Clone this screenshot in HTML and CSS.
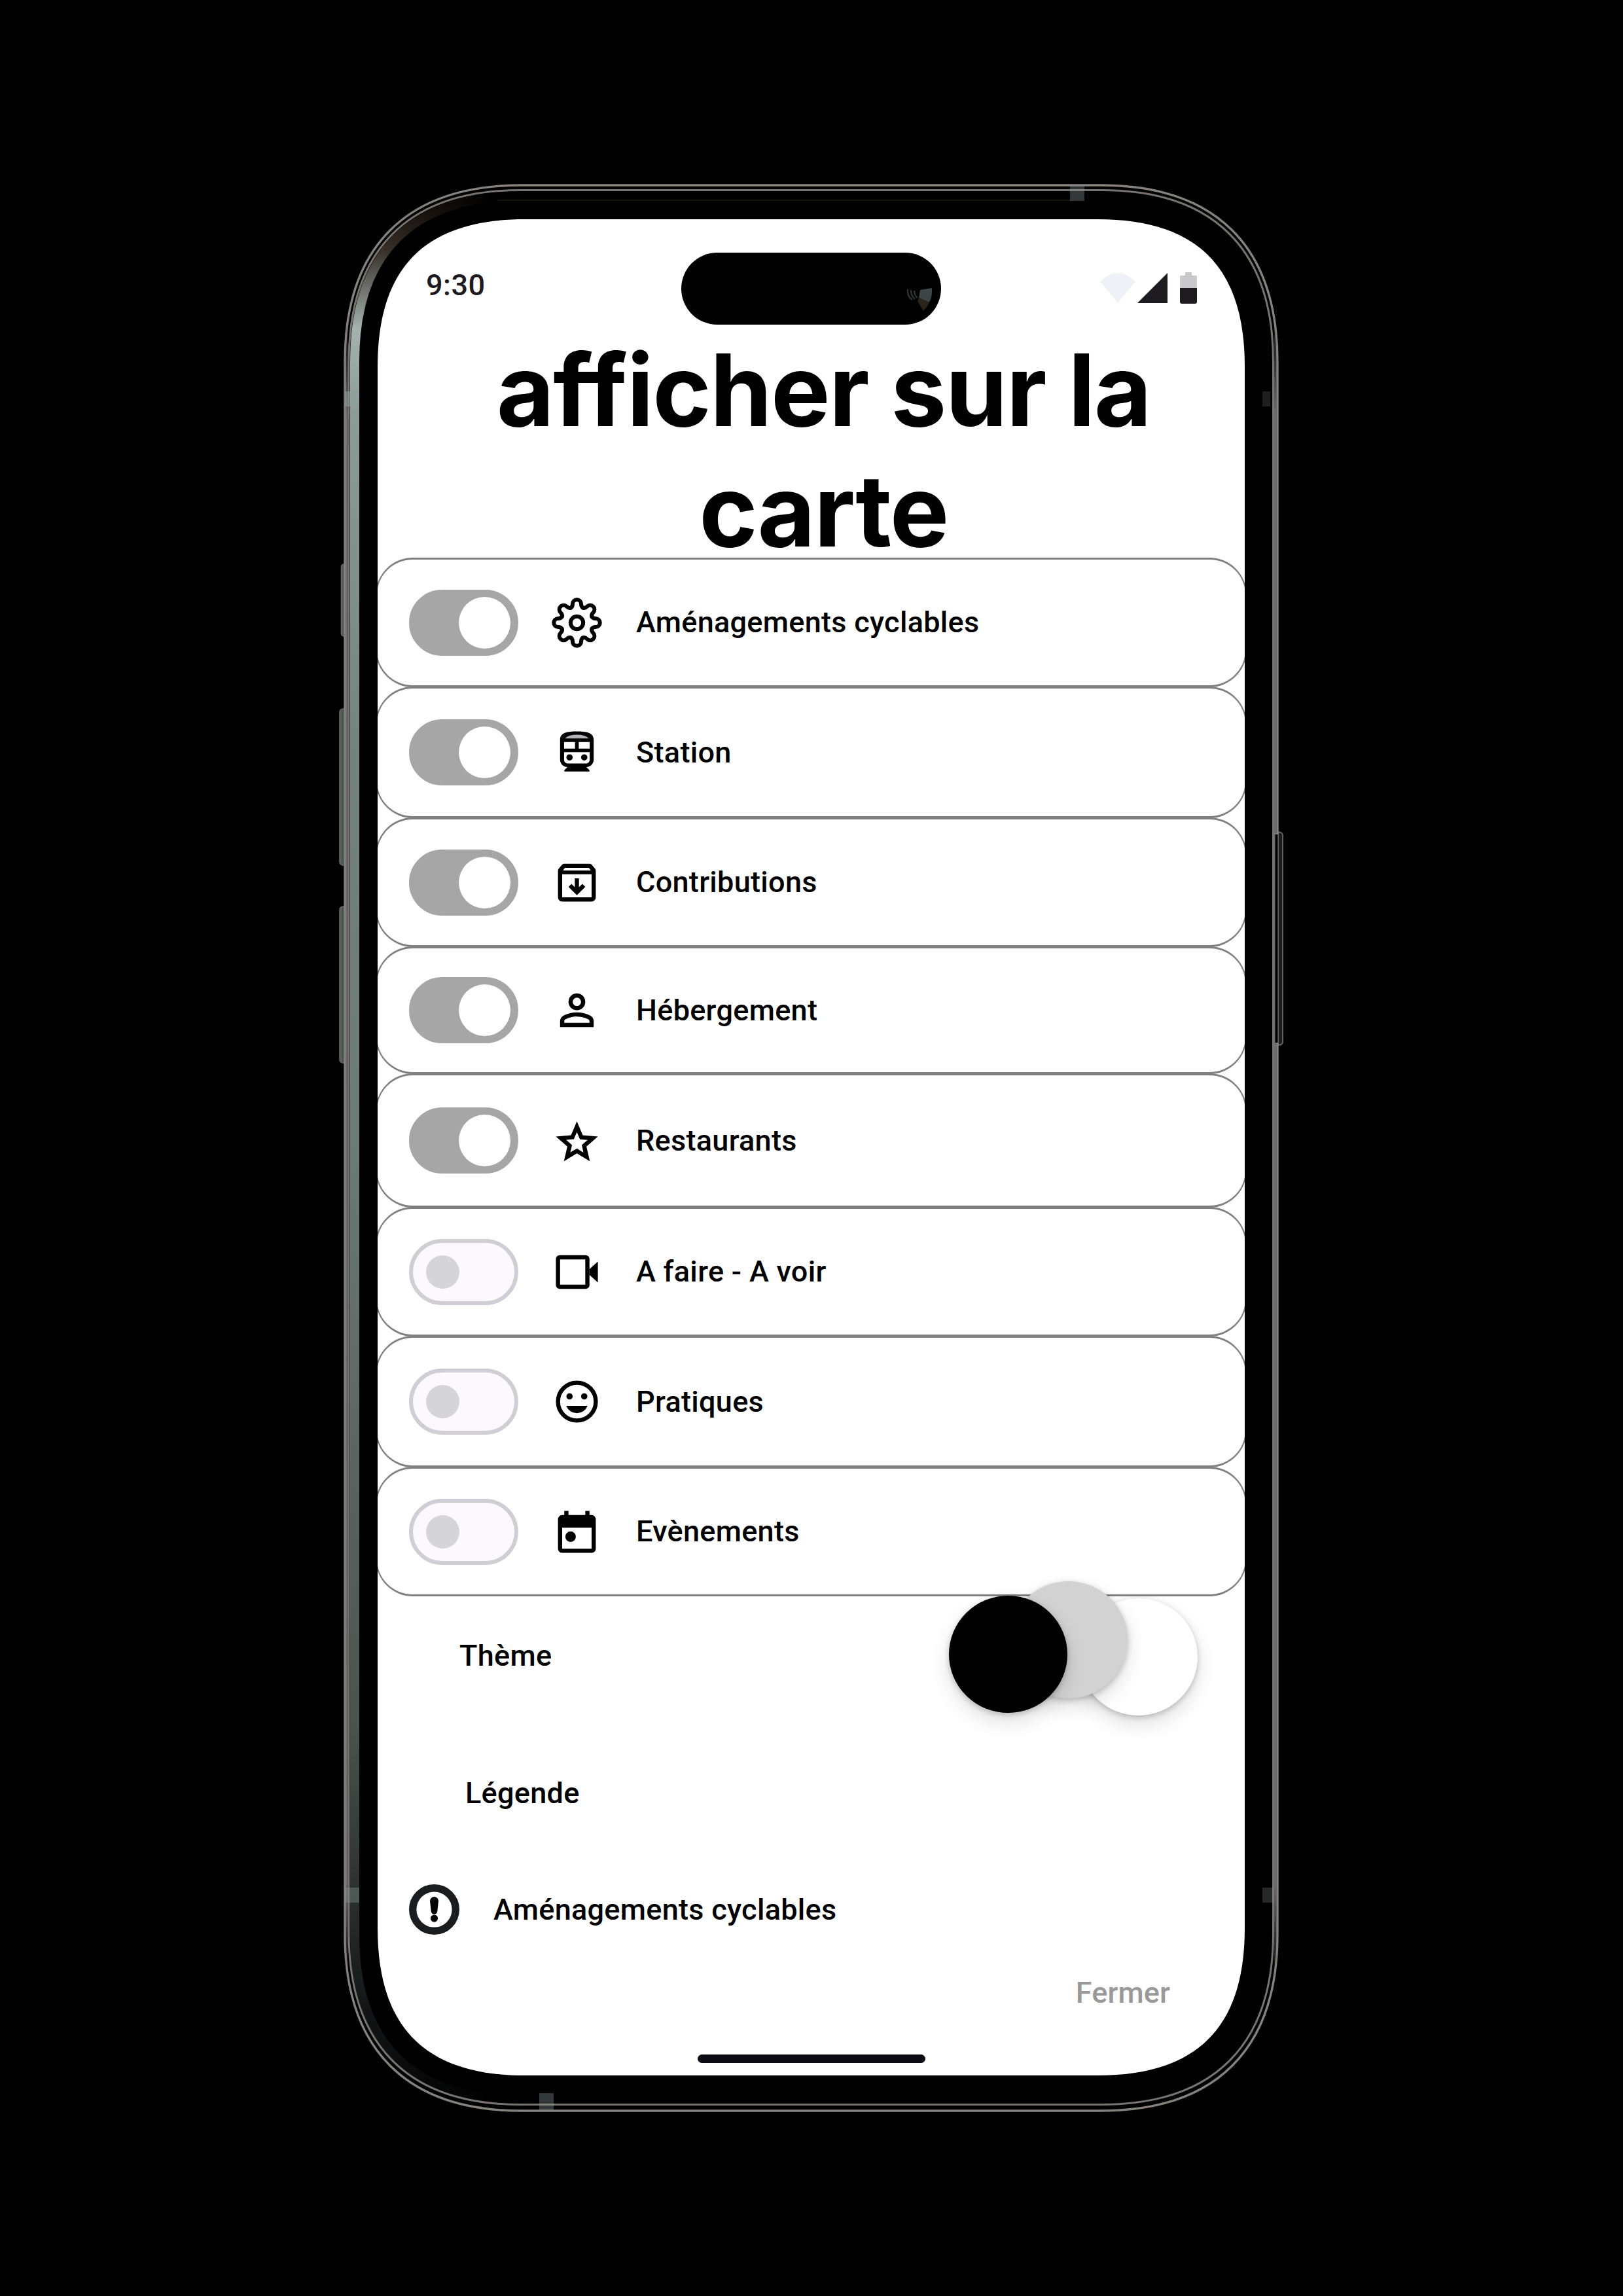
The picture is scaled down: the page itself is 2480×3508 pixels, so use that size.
FILE: index.html
```html
<!DOCTYPE html>
<html lang="fr">
<head>
<meta charset="utf-8">
<title>Afficher sur la carte</title>
<link rel="stylesheet" href="styles.css">
</head>
<body>
<main class="phone">
  <svg class="device" viewBox="515 271 1450 2966" aria-hidden="true">
    <defs>
      <linearGradient id="side" x1="0" y1="281" x2="0" y2="3227" gradientUnits="userSpaceOnUse">
        <stop offset="0" stop-color="#1a1008"/>
        <stop offset=".035" stop-color="#3a322b"/>
        <stop offset=".075" stop-color="#a5b3b0"/>
        <stop offset=".12" stop-color="#8b9b98"/>
        <stop offset=".3" stop-color="#72827f"/>
        <stop offset=".5" stop-color="#6b7a77"/>
        <stop offset=".8" stop-color="#4a534e"/>
        <stop offset=".9" stop-color="#252b2a"/>
        <stop offset=".95" stop-color="#101414"/>
        <stop offset="1" stop-color="#0a0c0c"/>
      </linearGradient>
      <linearGradient id="edge" x1="0" y1="480" x2="0" y2="3030" gradientUnits="userSpaceOnUse">
        <stop offset="0" stop-color="#6f6e6a" stop-opacity="0"/>
        <stop offset=".06" stop-color="#6f6e6a"/>
        <stop offset=".94" stop-color="#6f6e6a"/>
        <stop offset="1" stop-color="#6f6e6a" stop-opacity="0"/>
      </linearGradient>
      <linearGradient id="fade" x1="525" y1="0" x2="760" y2="0" gradientUnits="userSpaceOnUse">
        <stop offset="0" stop-color="#fff"/>
        <stop offset=".25" stop-color="#fff"/>
        <stop offset="1" stop-color="#000"/>
      </linearGradient>
      <mask id="leftOnly" maskUnits="userSpaceOnUse" x="515" y="271" width="1450" height="2966">
        <rect x="515" y="271" width="1450" height="2966" fill="url(#fade)"/>
      </mask>
      <linearGradient id="key" x1="0" y1="0" x2="1" y2="0">
        <stop offset="0" stop-color="#5f6765"/>
        <stop offset=".45" stop-color="#464e4c"/>
        <stop offset=".6" stop-color="#0d1010"/>
        <stop offset="1" stop-color="#2c3332"/>
      </linearGradient>
    </defs>
    <g fill="url(#key)" stroke="#6a6662" stroke-width="1.6">
      <rect x="521.5" y="862" width="12" height="110" rx="4"/>
      <rect x="519" y="1083" width="14" height="239" rx="5"/>
      <rect x="519" y="1385" width="14" height="239" rx="5"/>
    </g>
    <rect x="1946" y="1271.5" width="14" height="325" rx="5" fill="#1c1b1a" stroke="#6f6c67" stroke-width="1.8"/>
    <path d="M797 283H1682c176 0 270 94 270 270V2955c0 176-94 270-270 270H797c-176 0-270-94-270-270V553c0-176 94-270 270-270z" fill="#000" stroke="#85817c" stroke-width="3.4"/>
    <path d="M794 300H1685c165 0 252 87 252 252V2956c0 165-87 252-252 252H794c-165 0-252-87-252-252V552c0-165 87-252 252-252z" fill="none" stroke="url(#side)" stroke-width="14" mask="url(#leftOnly)"/>
    <path d="M795 290.5H1683.500c171 0 262 91 262 262V2953.500c0 171-91 262-262 262H795c-171 0-262-91-262-262V552.500c0-171 91-262 262-262z" fill="none" stroke="#77736e" stroke-width="3"/>
    <g fill="url(#edge)"><rect x="528" y="480" width="3.500" height="2550"/><rect x="1947" y="480" width="3.500" height="2550"/></g>
    <path d="M1950.500 1275V1593" stroke="#000" stroke-width="4"/>
    <path d="M760 306H1640" stroke="#211606" stroke-width="1.5"/>
    <g fill="#8fa09e" fill-opacity=".35">
      <rect x="527" y="598" width="22" height="23" fill-opacity=".55"/>
      <rect x="527" y="2884" width="22" height="23"/>
      <rect x="1929" y="598" width="12" height="23" fill-opacity=".2"/>
      <rect x="1929" y="2884" width="17" height="23" fill-opacity=".25"/>
      <rect x="1635" y="284" width="22" height="23"/>
      <rect x="824" y="3198" width="22" height="26"/>
    </g>
  </svg>

  <section class="screen">
    <header class="status">
      <span class="time">9:30</span>
      <span class="signals">
        <svg class="wifi" viewBox="0 0 54 46"><path d="M0 13Q27-13 54 13L27 46Z" fill="#eff1f6"/></svg>
        <svg class="cell" viewBox="0 0 46 46"><path d="M46 0V46H0Z" fill="#1d1b20"/></svg>
        <svg class="battery" viewBox="0 0 26 48"><path d="M8 0h10v5h6q2 0 2 2v17H0V7q0-2 2-2h6z" fill="#c9c9cb"/><path d="M0 24h26v21q0 3-3 3H3q-3 0-3-3z" fill="#1d1b20"/></svg>
      </span>
      <div class="island">
        <svg class="lens" viewBox="0 0 42 38"><path d="M22 5L40 2Q41 14 36 24L20 17Z" fill="#3d4647"/><path d="M20 17L36 24Q33 31 27 37L18 22Z" fill="#2b2519"/><path d="M3 4Q2 15 10 20M8 5Q8 14 14 19M13 6Q13 13 18 17" fill="none" stroke="#2a3233" stroke-width="2.5"/></svg>
      </div>
    </header>

    <h1 class="title">afficher sur la<br>carte</h1>

    <ul class="layers">
      <li class="layer">
        <span class="switch on"></span>
        <svg class="icon" viewBox="-38.25 -38.25 76.5 76.5">
          <defs><path id="tooth" d="M-9.400-22.700C-7.300-23.600-6.500-25.500-6.500-28.500A6.500 6.500 0 0 1 6.500-28.500C6.500-25.500 7.300-23.600 9.400-22.700"/></defs>
          <g fill="none" stroke="#000" stroke-width="6" stroke-linecap="round">
            <use href="#tooth"/><use href="#tooth" transform="rotate(45)"/><use href="#tooth" transform="rotate(90)"/><use href="#tooth" transform="rotate(135)"/>
            <use href="#tooth" transform="rotate(180)"/><use href="#tooth" transform="rotate(225)"/><use href="#tooth" transform="rotate(270)"/><use href="#tooth" transform="rotate(315)"/>
            <circle r="9.6"/>
          </g>
        </svg>
        <span class="label">Aménagements cyclables</span>
      </li>
      <li class="layer">
        <span class="switch on"></span>
        <svg class="icon" viewBox="0 0 24 24">
          <path fill-rule="evenodd" d="M12 2c-4.400 0-8 .5-8 4v9.500C4 17.400 5.600 19 7.500 19L6 20.500v.6h12v-.6L16.500 19c1.900 0 3.500-1.600 3.500-3.500V6c0-3.500-3.600-4-8-4zM5.900 7.100h5.200v3.100H5.900zM12.900 7.100h5.200v3.100h-5.200zM5.900 11.900h12.200v3.600c0 1-.8 1.800-1.800 1.800H7.700c-1 0-1.800-.8-1.800-1.800z"/>
          <path d="M6.300 5.400Q8 3.600 12 3.600T17.700 5.400Z" fill="#b4b2b5"/>
          <circle cx="8.5" cy="14.4" r="1.5"/><circle cx="15.5" cy="14.4" r="1.5"/>
        </svg>
        <span class="label">Station</span>
      </li>
      <li class="layer">
        <span class="switch on"></span>
        <svg class="icon" viewBox="0 0 24 24"><path fill-rule="evenodd" d="M20.540 5.230l-1.390-1.680C18.880 3.210 18.470 3 18 3H6c-.47 0-.88.21-1.160.55L3.460 5.230C3.170 5.570 3 6.020 3 6.500V19c0 1.100.9 2 2 2h14c1.100 0 2-.9 2-2V6.500c0-.48-.17-.93-.46-1.270zM6.240 5h11.520l.83 1.200H5.420zM5 19V8h14v11zM12 18l4-4-1.400-1.400-1.600 1.600V10h-2v4.200l-1.600-1.600L8 14z"/></svg>
        <span class="label">Contributions</span>
      </li>
      <li class="layer">
        <span class="switch on"></span>
        <svg class="icon" viewBox="0 0 24 24"><path d="M12 12q-1.650 0-2.825-1.175T8 8t1.175-2.825T12 4t2.825 1.175T16 8t-1.175 2.825T12 12m-8 8v-2.800q0-.85.438-1.562T5.600 14.550q1.550-.775 3.150-1.162T12 13t3.250.388t3.150 1.162q.725.375 1.163 1.088T20 17.200V20zm2-2h12v-.8q0-.275-.137-.5t-.363-.35q-1.350-.675-2.725-1.012T12 15t-2.775.338T6.500 16.350q-.225.125-.363.35T6 17.200zm6-8q.825 0 1.413-.587T14 8t-.587-1.412T12 6t-1.412.588T10 8t.588 1.413T12 10"/></svg>
        <span class="label">Hébergement</span>
      </li>
      <li class="layer">
        <span class="switch on"></span>
        <svg class="icon" viewBox="0 -.9 24 24"><path d="m8.850 16.825 3.150-1.900 3.150 1.925-.825-3.600 2.775-2.400-3.650-.325-1.450-3.400-1.450 3.375-3.650.325 2.775 2.425zM5.825 21l1.625-7.025L2 9.250l7.200-.625L12 2l2.800 6.625 7.200.625-5.450 4.725L18.175 21 12 17.275z"/></svg>
        <span class="label">Restaurants</span>
      </li>
      <li class="layer">
        <span class="switch"></span>
        <svg class="icon" viewBox="0 0 24 24"><rect x="3" y="5" width="14" height="14" rx=".8" fill="none" stroke="#000" stroke-width="2"/><path d="M18 10.600 22 7V17L18 13.400Z"/></svg>
        <span class="label">A faire - A voir</span>
      </li>
      <li class="layer">
        <span class="switch"></span>
        <svg class="icon" viewBox="0 0 24 24"><circle cx="12" cy="12" r="9" fill="none" stroke="#000" stroke-width="2"/><circle cx="8.5" cy="9.5" r="1.5"/><circle cx="15.5" cy="9.5" r="1.5"/><path d="M12 17.500q1.675 0 3.038-.925T17.100 14H6.900q.7 1.650 2.063 2.575T12 17.500"/></svg>
        <span class="label">Pratiques</span>
      </li>
      <li class="layer">
        <span class="switch"></span>
        <svg class="icon" viewBox="0 0 24 24"><path fill-rule="evenodd" d="M5 22q-.825 0-1.412-.587T3 20V6q0-.825.588-1.412T5 4h1V2h2v2h8V2h2v2h1q.825 0 1.413.588T21 6v14q0 .825-.587 1.413T19 22zm0-2h14V10H5z"/><circle cx="9" cy="14.3" r="2.5"/></svg>
        <span class="label">Evènements</span>
      </li>
    </ul>

    <div class="theme">
      <span class="label">Thème</span>
      <span class="swatches"><i class="swatch black"></i><i class="swatch grey"></i><i class="swatch white"></i></span>
    </div>

    <h2 class="legend-title label">Légende</h2>
    <div class="legend">
      <svg class="icon" viewBox="0 0 77 77"><circle cx="38.5" cy="38.5" r="32.8" fill="none" stroke="#1a1d1f" stroke-width="11.4"/><path d="M32 25.500a6.500 6.500 0 0 1 13 0L43.300 41a4.800 4.800 0 0 1-9.600 0Z"/><circle cx="38.5" cy="52" r="5.6"/></svg>
      <span class="label">Aménagements cyclables</span>
    </div>
    <a class="close label">Fermer</a>
    <div class="homebar"></div>
  </section>
</main>
</body>
</html>
```
FILE: styles.css
```css
* { box-sizing: border-box; }

body {
  margin: 0;
  width: 2480px;
  height: 3508px;
  padding: 281px 525px;
  background: #000;
  font-family: Roboto, "Liberation Sans", sans-serif;
  overflow: hidden;
}

.phone {
  position: relative;
  width: 1429px;
  height: 2946px;
  padding: 54px 52px 56px;
}

/* hardware artwork behind the screen */
.device {
  position: absolute;
  left: -10px;
  top: -10px;
  width: 1450px;
  height: 2966px;
}

.screen {
  position: relative;
  display: flex;
  flex-direction: column;
  width: 1325px;
  height: 2836px;
  clip-path: path("M225 0H1100c152 0 225 73 225 225V2611c0 152-73 225-225 225H225c-152 0-225-73-225-225V225C0 73 73 0 225 0z");
  background: #fff;
  overflow: hidden;
}

.status {
  position: relative;
  display: flex;
  flex: none;
  justify-content: space-between;
  align-items: center;
  height: 169px;
  padding: 41px 73px 10px 74px;
}

.time {
  color: #1d1b20;
  font-size: 45px;
  font-weight: 500;
  letter-spacing: .5px;
}

.signals { display: flex; align-items: center; padding-top: 10px; }
.wifi { width: 54px; height: 46px; margin-right: 3px; }
.cell { width: 46px; height: 46px; margin-right: 19px; }
.battery { width: 26px; height: 48px; }

.island {
  position: absolute;
  left: 464px;
  top: 51px;
  width: 397px;
  height: 110px;
  border-radius: 55px;
  background: #000;
}

.lens { position: absolute; right: 12px; top: 52px; width: 42px; height: 38px; }

.title {
  flex: none;
  height: 348px;
  margin: 0;
  padding-left: 38px;
  font: 700 152px/184px Inter, sans-serif;
  letter-spacing: -1.7px;
  text-align: center;
  color: #000;
}

.layers {
  display: grid;
  flex: none;
  grid-template-rows: 197px 200px 197px 194px 204px 197px 200px 197px;
  margin: 0 -3px;
  padding: 0;
  list-style: none;
}

.layer {
  display: flex;
  align-items: center;
  gap: 51px;
  margin-bottom: -1px;
  padding-left: 49px;
  border: 2px solid #808080;
  border-width: 3px 2px;
  border-radius: 57px;
}

.layer .label { margin-left: 1px; }

.switch {
  display: flex;
  align-items: center;
  width: 167px;
  height: 101px;
  padding-left: 20px;
  border: 6px solid #d0ced5;
  border-radius: 51px;
  background: #fcf8fd;
}

.switch::before {
  content: "";
  width: 51px;
  height: 51px;
  border-radius: 50%;
  background: #d5d4d9;
}

.switch.on { padding-left: 70px; border-color: #a6a6a6; background: #a6a6a6; }
.switch.on::before { width: 79px; height: 79px; background: #fff; }

.icon { width: 77px; height: 77px; flex: none; }

.label {
  font-size: 45px;
  font-weight: 500;
  line-height: 64px;
  letter-spacing: .3px;
  color: #000;
  white-space: nowrap;
}

.theme {
  display: flex;
  flex: none;
  justify-content: space-between;
  align-items: center;
  height: 183px;
  padding: 0 72px 0 125px;
}

.swatches { display: flex; align-self: flex-start; }

.swatch {
  position: relative;
  width: 181px;
  height: 179px;
  border-radius: 50%;
  box-shadow: 0 3px 8px rgba(0, 0, 0, .22), 0 13px 26px 4px rgba(0, 0, 0, .1);
}

.swatch.black { z-index: 2; background: #000; }
.swatch.grey { z-index: 1; margin: -22px 0 0 -89px; background: #d2d2d2; }
.swatch.white { margin: 4px 0 0 -74px; background: #fff; }

.legend-title { margin: 87px 0 0 134px; }

.legend {
  display: flex;
  align-items: center;
  gap: 52px;
  height: 77px;
  margin: 107px 0 0 48px;
}

.close {
  align-self: flex-end;
  margin: 57px 114px 0 0;
  color: #999;
  letter-spacing: .1px;
}

.homebar {
  align-self: center;
  width: 348px;
  height: 13px;
  margin-top: 62px;
  border-radius: 7px;
  background: #0c0b14;
}
```
